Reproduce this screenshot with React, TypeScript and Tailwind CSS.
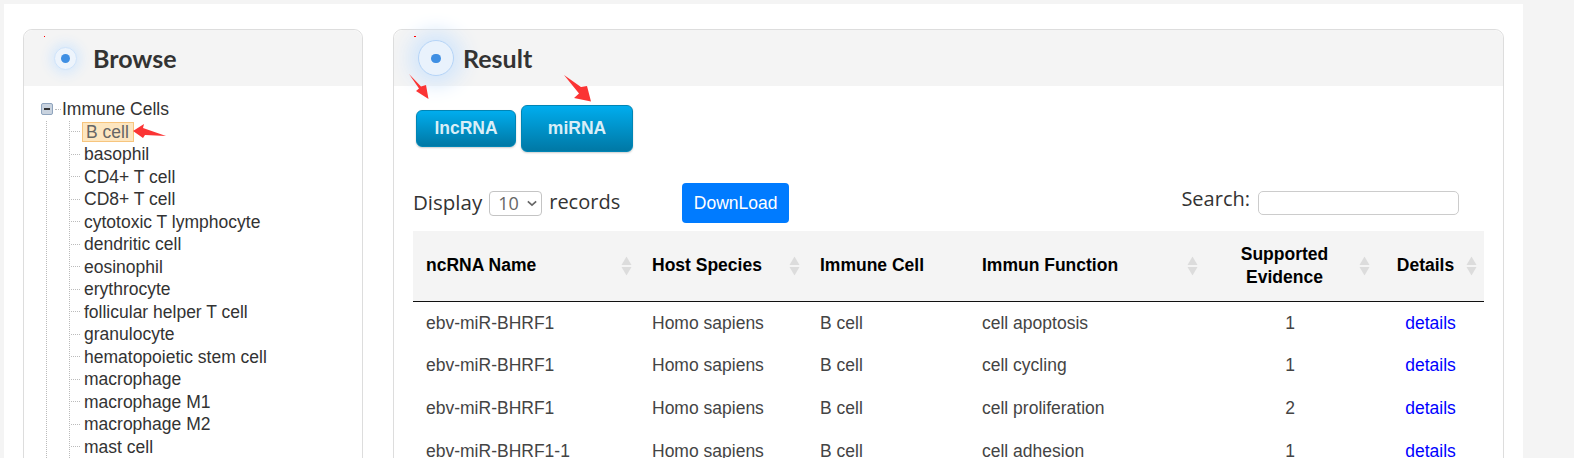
const cells = [
  'basophil',
  'CD4+ T cell',
  'CD8+ T cell',
  'cytotoxic T lymphocyte',
  'dendritic cell',
  'eosinophil',
  'erythrocyte',
  'follicular helper T cell',
  'granulocyte',
  'hematopoietic stem cell',
  'macrophage',
  'macrophage M1',
  'macrophage M2',
  'mast cell',
]

const rows = [
  ['ebv-miR-BHRF1', 'Homo sapiens', 'B cell', 'cell apoptosis', '1'],
  ['ebv-miR-BHRF1', 'Homo sapiens', 'B cell', 'cell cycling', '1'],
  ['ebv-miR-BHRF1', 'Homo sapiens', 'B cell', 'cell proliferation', '2'],
  ['ebv-miR-BHRF1-1', 'Homo sapiens', 'B cell', 'cell adhesion', '1'],
]

function SortIcon() {
  return (
    <svg viewBox="0 0 11 19" className="absolute top-1/2 right-[7px] h-[19px] w-[11px] -translate-y-1/2">
      <path d="M5.5 0L10.5 8.5H0.5Z" fill="#dcdcdc" />
      <path d="M5.5 19L10.5 10.5H0.5Z" fill="#dcdcdc" />
    </svg>
  )
}

function Arrow({ className, viewBox, points }: { className: string; viewBox: string; points: string }) {
  return (
    <svg viewBox={viewBox} className={`pointer-events-none absolute ${className}`}>
      <polygon points={points} fill="#fb3434" />
    </svg>
  )
}

function PanelHeader({ title, big }: { title: string; big?: boolean }) {
  return (
    <div className={`flex h-[56px] items-center rounded-t-[9px] bg-[#f4f4f4] ${big ? 'pl-[24px]' : 'pl-[30px]'}`}>
      {big ? (
        <div className="flex h-[36px] w-[36px] items-center justify-center rounded-full border border-[#b5d4f7] bg-[#e9f2fc] shadow-[0_0_20px_9px_#d3e6fb]">
          <div className="h-[9px] w-[10px] rounded-full bg-[#3f8fe3]" />
        </div>
      ) : (
        <div className="flex h-[23px] w-[23px] items-center justify-center rounded-full border border-[#cfe3fa] bg-[#edf4fc] shadow-[0_0_12px_4px_#d8e9fb]">
          <div className="h-[9px] w-[9px] rounded-full bg-[#3f8fe3]" />
        </div>
      )}
      <h2 className={`mt-[2px] font-['Lato',sans-serif] text-[25px] font-bold text-[#333] ${big ? 'ml-[9px]' : 'ml-[16px]'}`}>
        {title}
      </h2>
    </div>
  )
}

function TreeRow({ label, selected }: { label: string; selected?: boolean }) {
  return (
    <li className="flex h-[22.5px] items-center">
      <span className="mr-[2px] w-[9px] border-t border-dotted border-[#bbb]" />
      {selected ? (
        <span className="flex h-[20px] items-center border border-[#f7c57e] bg-[#fde6c0] pr-[4px] pl-[3px] text-[#666]">
          {label}
        </span>
      ) : (
        <span className="pl-[2px]">{label}</span>
      )}
    </li>
  )
}

function BrowsePanel() {
  return (
    <section className="relative h-[600px] w-[340px] shrink-0 rounded-[9px] border border-[#ddd]">
      <PanelHeader title="Browse" />
      <div className="pt-[12px] pl-[17px] font-['Liberation_Sans',sans-serif] text-[17.5px] leading-[22px] text-[#333]">
        <div className="flex h-[22.5px] items-center">
          <span className="flex h-[12px] w-[12px] items-center justify-center rounded-[2px] border border-[#8fa4bd] bg-[#c9d3df]">
            <span className="h-[2px] w-[6px] bg-[#333]" />
          </span>
          <span className="ml-[2px] w-[6px] border-t border-dotted border-[#bbb]" />
          <span className="ml-[1px]">Immune Cells</span>
        </div>
        <div className="ml-[5px] border-l border-dotted border-[#bbb] pl-[22px]">
          <ul className="border-l border-dotted border-[#bbb] pl-[1px]">
            <TreeRow label="B cell" selected />
            {cells.map((name) => (
              <TreeRow key={name} label={name} />
            ))}
          </ul>
        </div>
      </div>
      <Arrow
        className="top-[94px] left-[109px] h-[14px] w-[34px]"
        viewBox="0 0 34 14"
        points="0,7 11,0 10,4 33,12 12,11 10,14"
      />
      <span className="absolute top-[6px] left-[20px] h-[1px] w-[1px] bg-[#f00]" />
    </section>
  )
}

function ResultTable() {
  return (
    <table className="ml-[19px] w-[1071px] table-fixed border-collapse font-['Liberation_Sans',sans-serif] text-[17.5px] text-[#444]">
      <colgroup>
        <col className="w-[226px]" />
        <col className="w-[168px]" />
        <col className="w-[162px]" />
        <col className="w-[236px]" />
        <col className="w-[172px]" />
        <col className="w-[107px]" />
      </colgroup>
      <thead>
        <tr className="h-[70px] border-b border-[#111] bg-[#f4f4f4] font-bold text-black">
          <th className="relative pb-[2px] pl-[13px] text-left"><span>ncRNA Name</span><SortIcon /></th>
          <th className="relative pb-[2px] pl-[13px] text-left"><span>Host Species</span><SortIcon /></th>
          <th className="pb-[2px] pl-[13px] text-left">Immune Cell</th>
          <th className="relative pb-[2px] pl-[13px] text-left"><span>Immun Function</span><SortIcon /></th>
          <th className="relative pr-[26px] pl-[13px] text-center leading-[23px]"><span>Supported Evidence</span><SortIcon /></th>
          <th className="relative pr-[10px] pb-[2px] text-center"><span>Details</span><SortIcon /></th>
        </tr>
      </thead>
      <tbody>
        {rows.map((row, i) => (
          <tr key={i} className="h-[43px]">
            <td className="pl-[13px]">{row[0]}</td>
            <td className="pl-[13px]">{row[1]}</td>
            <td className="pl-[13px]">{row[2]}</td>
            <td className="pl-[13px]">{row[3]}</td>
            <td className="pr-[2px] text-center">{row[4]}</td>
            <td className="text-center text-[#0000ff]">details</td>
          </tr>
        ))}
      </tbody>
    </table>
  )
}

function ResultPanel() {
  return (
    <section className="relative h-[600px] w-[1111px] shrink-0 rounded-[9px] border border-[#ddd]">
      <PanelHeader title="Result" big />
      <div className="flex items-center gap-[5px] pt-[19px] pl-[22px] font-['Liberation_Sans',sans-serif] text-[17.5px] font-bold text-[#d9eef7] [text-shadow:0_1px_1px_rgba(0,0,0,0.3)]">
        <button className="h-[37px] w-[100px] rounded-[6px] border border-[#0085b5] bg-gradient-to-b from-[#00adee] to-[#0078a5] shadow-[0_1px_2px_rgba(0,0,0,0.2)]">
          lncRNA
        </button>
        <button className="h-[47px] w-[112px] rounded-[6px] border border-[#0085b5] bg-gradient-to-b from-[#00adee] to-[#0078a5] shadow-[0_1px_2px_rgba(0,0,0,0.2)]">
          miRNA
        </button>
      </div>
      <div className="mt-[31px] flex h-[40px] items-center pr-[44px] pl-[19px] font-['Open_Sans',sans-serif] text-[20.5px] text-[#333]">
        <span className="mb-[2px]">Display</span>
        <span className="mx-[7px] flex h-[25px] w-[53px] items-center justify-between rounded-[4px] border border-[#c4c4c4] pr-[4px] pl-[8px] text-[18px] text-[#666]">
          10
          <svg viewBox="0 0 12 8" className="h-[7px] w-[10px]" fill="none" stroke="#666" strokeWidth="2">
            <path d="M1 1.5L6 6L11 1.5" />
          </svg>
        </span>
        <span className="mb-[2px] text-[20px]">records</span>
        <button className="ml-[62px] h-[40px] w-[107px] rounded-[4px] bg-[#007bff] font-['Liberation_Sans',sans-serif] text-[17.5px] text-white">
          DownLoad
        </button>
        <span className="mb-[8px] ml-auto text-[20px]">Search:</span>
        <input className="mb-[1px] ml-[8px] h-[24px] w-[201px] rounded-[5px] border border-[#ccc] bg-white" />
      </div>
      <div className="mt-[8px]">
        <ResultTable />
      </div>
      <Arrow
        className="top-[44px] left-[15px] h-[26px] w-[20px]"
        viewBox="0 0 20 26"
        points="0,0 12,12.5 17,11 19.5,25 7,17 10,14.5"
      />
      <Arrow
        className="top-[45px] left-[170px] h-[27px] w-[28px]"
        viewBox="0 0 28 27"
        points="0,0 17,12 23,11 27,26.5 10,23 15,18.5"
      />
      <span className="absolute top-[6px] left-[20px] h-[1px] w-[2px] bg-[#f00]" />
    </section>
  )
}

export default function App() {
  return (
    <div className="h-[458px] overflow-hidden bg-[#f4f4f4] pt-[4px] pl-[4px]">
      <div className="flex h-[600px] w-[1519px] gap-[30px] bg-white pt-[25px] pl-[19px]">
        <BrowsePanel />
        <ResultPanel />
      </div>
    </div>
  )
}
